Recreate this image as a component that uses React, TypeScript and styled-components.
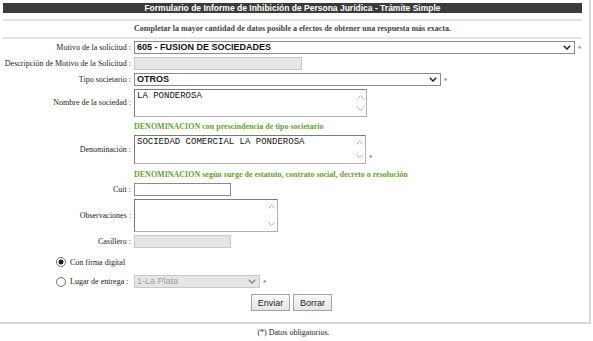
import React from 'react';
import styled, { createGlobalStyle } from 'styled-components';

const GlobalStyle = createGlobalStyle`
  html, body {
    margin: 0;
    padding: 0;
    background: #fff;
  }
  body {
    font-family: "Liberation Serif", "Times New Roman", serif;
    color: #222;
  }
`;

const GREEN = '#6a9c3c';

const Page = styled.div`
  width: 591px;
  height: 324px;
  box-sizing: border-box;
  border-right: 2px solid #d6d6d6;
  border-bottom: 2px solid #d6d6d6;
  padding-top: 3px;
`;

const TitleBar = styled.div`
  margin-left: 3px;
  width: 579px;
  height: 10px;
  background: #3b3b3b;
  color: #fff;
  font: bold 8.5px "Liberation Sans Narrow", "Liberation Sans", Arial, sans-serif;
  line-height: 10px;
  text-align: center;
  white-space: nowrap;
`;

const Rule = styled.div<{ $mt?: number }>`
  margin: ${({ $mt }) => $mt ?? 0}px 0 0 3px;
  width: 579px;
  height: 2px;
  background: #e4e4e4;
`;

const Subtitle = styled.div`
  margin-left: 3px;
  width: 579px;
  height: 16px;
  line-height: 16px;
  text-align: center;
  font-weight: bold;
  font-size: 8px;
  color: #444;
`;

const Form = styled.form`
  display: flex;
  flex-direction: column;
  gap: 3px;
  padding-top: 2px;
  font-size: 8px;
`;

const Row = styled.div<{ $mt?: number }>`
  display: flex;
  align-items: center;
  gap: 3px;
  margin-top: ${({ $mt }) => $mt ?? 0}px;
`;

const Label = styled.label`
  width: 131px;
  flex-shrink: 0;
  text-align: right;
  font-size: 8px;
  line-height: 10px;
  color: #222;
  white-space: nowrap;
`;

const SelectWrap = styled.div<{ $w: number }>`
  position: relative;
  width: ${({ $w }) => $w}px;
  height: 13px;
`;

const Select = styled.select<{ $disabled?: boolean }>`
  appearance: none;
  display: block;
  width: 100%;
  height: 100%;
  box-sizing: border-box;
  margin: 0;
  padding: 0 0 0 2px;
  border: 1px solid ${({ $disabled }) => ($disabled ? '#c8c8c8' : '#8a8a8a')};
  border-radius: 0;
  background: ${({ $disabled }) => ($disabled ? '#e6e6e6' : '#fff')};
  font: ${({ $disabled }) => ($disabled ? 'normal' : 'bold')} 9px "Liberation Sans", Arial, sans-serif;
  color: ${({ $disabled }) => ($disabled ? '#a0a0a0' : '#111')};
  line-height: 11px;
  outline: none;
  opacity: 1;
`;

const Chevron = styled.svg<{ $disabled?: boolean }>`
  position: absolute;
  right: 4px;
  top: 4px;
  width: 8px;
  height: 5px;
  color: ${({ $disabled }) => ($disabled ? '#8a8a8a' : '#222')};
  pointer-events: none;
`;

const TextInput = styled.input<{ $w: number; $disabled?: boolean }>`
  display: block;
  width: ${({ $w }) => $w}px;
  height: 13px;
  box-sizing: border-box;
  margin: 0;
  padding: 0 2px;
  border: 1px solid ${({ $disabled }) => ($disabled ? '#c8c8c8' : '#8a8a8a')};
  background: ${({ $disabled }) => ($disabled ? '#e6e6e6' : '#fff')};
  font: 9px "Liberation Sans", Arial, sans-serif;
  outline: none;
`;

const AreaWrap = styled.div<{ $w: number; $h: number }>`
  position: relative;
  width: ${({ $w }) => $w}px;
  height: ${({ $h }) => $h}px;
`;

const TextArea = styled.textarea`
  display: block;
  width: 100%;
  height: 100%;
  box-sizing: border-box;
  margin: 0;
  padding: 1px 2px;
  border: 1px solid #7a7a7a;
  border-right-color: #b0b0b0;
  border-bottom-color: #b0b0b0;
  resize: none;
  overflow: hidden;
  font: 9px "Liberation Mono", "Courier New", monospace;
  line-height: 10px;
  color: #111;
  outline: none;
`;

const ScrollArrow = styled.svg<{ $dir: 'up' | 'down' }>`
  position: absolute;
  right: 3px;
  width: 7px;
  height: 4px;
  color: #b4b4b4;
  ${({ $dir }) => ($dir === 'up' ? 'top: 6px;' : 'bottom: 6px;')}
`;

const Required = styled.span<{ $bottom?: boolean }>`
  color: ${GREEN};
  font: bold 8px "Liberation Sans", Arial, sans-serif;
  line-height: 8px;
  align-self: ${({ $bottom }) => ($bottom ? 'flex-end' : 'center')};
  padding-top: ${({ $bottom }) => ($bottom ? '0' : '3px')};
  margin-bottom: ${({ $bottom }) => ($bottom ? '2px' : '0')};
`;

const Hint = styled.div<{ $h: number }>`
  height: ${({ $h }) => $h}px;
  padding-left: 134px;
  display: flex;
  align-items: flex-end;
  font-weight: bold;
  font-size: 8px;
  line-height: 10px;
  color: ${GREEN};
  white-space: nowrap;
`;

const RadioLabel = styled.label<{ $w?: number }>`
  display: flex;
  align-items: center;
  gap: 4px;
  padding-left: 56px;
  box-sizing: border-box;
  width: ${({ $w }) => ($w ? `${$w}px` : 'auto')};
  height: 12px;
  flex-shrink: 0;
  font-size: 8px;
  color: #222;
  white-space: nowrap;
`;

const Radio = styled.input`
  appearance: none;
  display: block;
  margin: 0;
  width: 10px;
  height: 10px;
  border: 1px solid #6f6f6f;
  border-radius: 50%;
  background: #fff;
  flex-shrink: 0;

  &:checked {
    background: radial-gradient(circle, #1e1e1e 0 2.2px, #fff 2.8px);
  }
`;

const Buttons = styled.div`
  display: flex;
  justify-content: center;
  gap: 3px;
  margin-top: 3px;
  padding-right: 6px;
`;

const Button = styled.button`
  width: 39px;
  height: 17px;
  margin: 0;
  padding: 0;
  border: 1px solid #a2a2a2;
  border-radius: 0;
  background: linear-gradient(#f7f7f7, #e6e6e6);
  font: 9px "Liberation Sans", Arial, sans-serif;
  color: #222;
`;

const Footnote = styled.div`
  height: 17px;
  line-height: 17px;
  text-align: center;
  font-size: 8px;
  color: #222;
  padding-right: 6px;
`;

const ChevronIcon = ({ disabled }: { disabled?: boolean }) => (
  <Chevron $disabled={disabled} viewBox="0 0 8 5">
    <path d="M0.8 0.8 L4 4 L7.2 0.8" fill="none" stroke="currentColor" strokeWidth="1.5" />
  </Chevron>
);

const DropDown = ({ w, value, disabled }: { w: number; value: string; disabled?: boolean }) => (
  <SelectWrap $w={w}>
    <Select $disabled={disabled} defaultValue={value} disabled={disabled}>
      <option>{value}</option>
    </Select>
    <ChevronIcon disabled={disabled} />
  </SelectWrap>
);

const Area = ({ w, h, value }: { w: number; h: number; value?: string }) => (
  <AreaWrap $w={w} $h={h}>
    <TextArea defaultValue={value} />
    <ScrollArrow $dir="up" viewBox="0 0 7 4">
      <path d="M0.5 3.5 L3.5 0.5 L6.5 3.5" fill="none" stroke="currentColor" strokeWidth="1" />
    </ScrollArrow>
    <ScrollArrow $dir="down" viewBox="0 0 7 4">
      <path d="M0.5 0.5 L3.5 3.5 L6.5 0.5" fill="none" stroke="currentColor" strokeWidth="1" />
    </ScrollArrow>
  </AreaWrap>
);

export default function App() {
  return (
    <>
      <GlobalStyle />
      <Page>
        <TitleBar>Formulario de Informe de Inhibición de Persona Jurídica - Trámite Simple</TitleBar>
        <Rule $mt={6} />
        <Subtitle>Completar la mayor cantidad de datos posible a efectos de obtener una respuesta más exacta.</Subtitle>
        <Rule />
        <Form onSubmit={(e) => e.preventDefault()}>
          <Row>
            <Label>Motivo de la solicitud :</Label>
            <DropDown w={441} value="605 - FUSION DE SOCIEDADES" />
            <Required>*</Required>
          </Row>
          <Row>
            <Label>Descripción de Motivo de la Solicitud :</Label>
            <TextInput $w={168} $disabled disabled />
          </Row>
          <Row>
            <Label>Tipo societario :</Label>
            <DropDown w={307} value="OTROS" />
            <Required>*</Required>
          </Row>
          <Row>
            <Label>Nombre de la sociedad :</Label>
            <Area w={233} h={28} value="LA PONDEROSA" />
          </Row>
          <Hint $h={12}>DENOMINACION con prescindencia de tipo societario</Hint>
          <Row>
            <Label>Denominación :</Label>
            <Area w={232} h={29} value="SOCIEDAD COMERCIAL LA PONDEROSA" />
            <Required $bottom>*</Required>
          </Row>
          <Hint $h={13}>DENOMINACION según surge de estatuto, contrato social, decreto o resolución</Hint>
          <Row>
            <Label>Cuit :</Label>
            <TextInput $w={97} />
          </Row>
          <Row>
            <Label>Observaciones :</Label>
            <Area w={144} h={33} />
          </Row>
          <Row>
            <Label>Casillero :</Label>
            <TextInput $w={97} $disabled disabled />
          </Row>
          <Row $mt={5}>
            <RadioLabel>
              <Radio type="radio" name="entrega" defaultChecked />
              Con firma digital
            </RadioLabel>
          </Row>
          <Row $mt={4}>
            <RadioLabel $w={131}>
              <Radio type="radio" name="entrega" />
              Lugar de entrega :
            </RadioLabel>
            <DropDown w={126} value="1-La Plata" disabled />
            <Required>*</Required>
          </Row>
          <Buttons>
            <Button type="submit">Enviar</Button>
            <Button type="reset">Borrar</Button>
          </Buttons>
        </Form>
      </Page>
      <Footnote>(*) Datos obligatorios.</Footnote>
    </>
  );
}
